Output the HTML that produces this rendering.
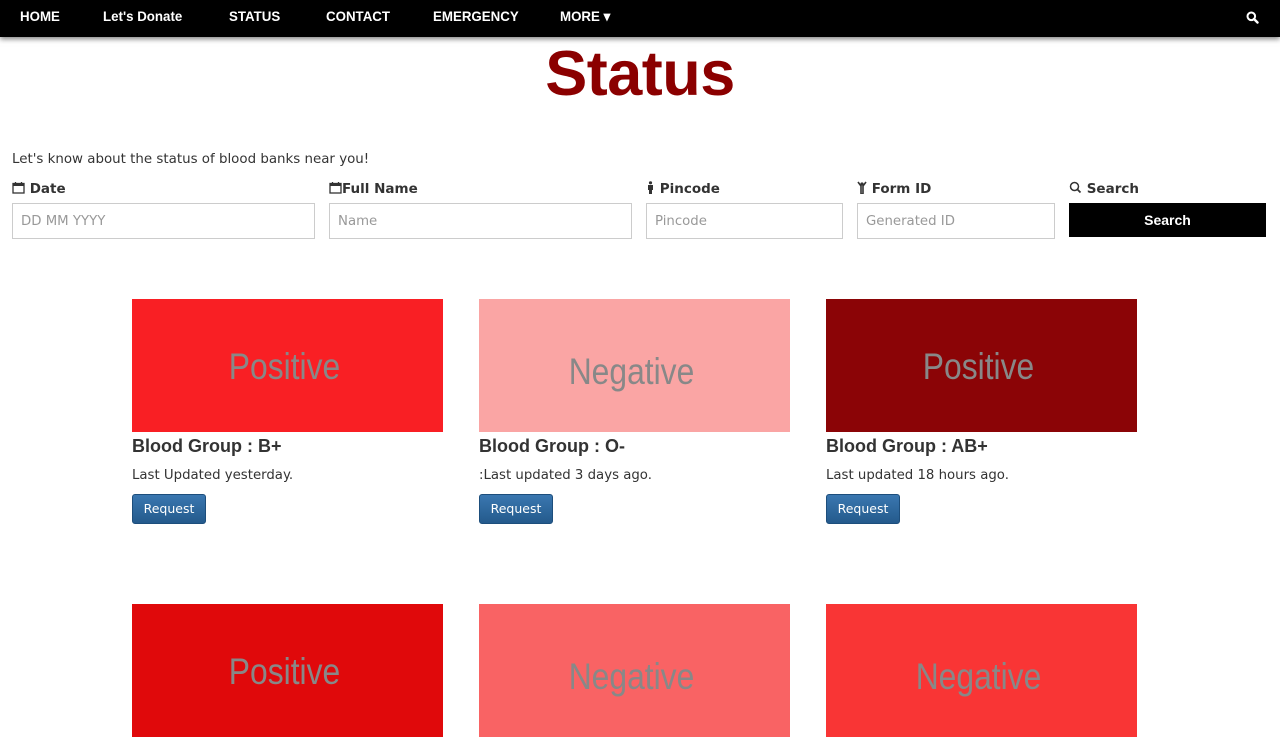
<!DOCTYPE html>
<html><head><style>
*{box-sizing:border-box;margin:0;padding:0}
body{width:1280px;height:742px;overflow:hidden;background:#fff;font-family:"DejaVu Sans",Verdana,sans-serif;color:#333}
.nav{position:absolute;top:0;left:0;width:1280px;height:37px;background:#000;box-shadow:0 2px 5px rgba(0,0,0,.5);font-family:"Liberation Sans",Arial,sans-serif;color:#fff;font-size:14px;font-weight:bold}
.nav span{position:absolute;top:8px;transform:scaleX(.95);transform-origin:left}
h1{position:absolute;top:38px;left:0;width:1280px;text-align:center;font-family:"Liberation Sans",Arial,sans-serif;font-size:63px;font-weight:bold;color:#8b0000;letter-spacing:-.5px}
.intro{position:absolute;top:152px;left:12px;font-size:13.4px}
.lbl{position:absolute;top:181px;font-size:13.5px;font-weight:bold}
.lbl svg{vertical-align:-1px}
.inp{position:absolute;top:203px;height:36px;border:1px solid #ccc;font-size:13.3px;color:#999;padding:10px 8px}
.btn{position:absolute;top:203px;left:1069px;width:197px;height:34px;background:#000;color:#fff;font-family:"Liberation Sans",Arial,sans-serif;font-weight:bold;font-size:14px;text-align:center;line-height:34px}
.img{position:absolute;width:311px;height:133px;overflow:hidden}
.img span{position:absolute;left:-3px;width:311px;text-align:center;font-family:"Liberation Sans Narrow","Liberation Sans",Arial,sans-serif;font-size:37px;color:#888;transform:scaleX(.86)}
.t{position:absolute;font-family:"Liberation Sans",Arial,sans-serif;font-weight:bold;font-size:18px;color:#333}
.s{position:absolute;font-size:13.3px}
.r{position:absolute;width:74px;height:30px;border-radius:3px;background:linear-gradient(#3a77b0,#245a8c);border:1px solid #1d4e7c;color:#fff;font-family:"DejaVu Sans",sans-serif;font-size:12.5px;text-align:center;line-height:28px}
</style></head><body>
<div class="nav">
<span style="left:20px">HOME</span><span style="left:103px">Let's Donate</span><span style="left:229px">STATUS</span><span style="left:326px">CONTACT</span><span style="left:433px">EMERGENCY</span><span style="left:560px">MORE ▾</span>
<svg style="position:absolute;left:1246px;top:11px" width="13" height="13" viewBox="0 0 13 13"><circle cx="5.3" cy="5.3" r="3.8" fill="none" stroke="#fff" stroke-width="2"/><path d="M8 8l3.5 3.5" stroke="#fff" stroke-width="2.4" stroke-linecap="round"/></svg>
</div>
<h1>Status</h1>
<div class="intro">Let's know about the status of blood banks near you!</div>
<div class="lbl" style="left:12px"><svg width="13" height="13" viewBox="0 0 13 13"><rect x="1" y="2.5" width="11" height="9.5" fill="none" stroke="#333" stroke-width="1.3"/><rect x="1" y="2.5" width="11" height="2.5" fill="#333"/><path d="M3.5 1v3M9.5 1v3" stroke="#333" stroke-width="1.3"/></svg> Date</div>
<div class="lbl" style="left:329px"><svg width="13" height="13" viewBox="0 0 13 13"><rect x="1" y="2.5" width="11" height="9.5" fill="none" stroke="#333" stroke-width="1.3"/><rect x="1" y="2.5" width="11" height="2.5" fill="#333"/><path d="M3.5 1v3M9.5 1v3" stroke="#333" stroke-width="1.3"/></svg>Full Name</div>
<div class="lbl" style="left:646px"><svg width="9" height="13" viewBox="0 0 9 13"><circle cx="4.5" cy="1.8" r="1.6" fill="#333"/><path d="M2 4h5v5H6v4H3V9H2z" fill="#333"/></svg> Pincode</div>
<div class="lbl" style="left:857px"><svg width="10" height="13" viewBox="0 0 10 13"><circle cx="5" cy="3" r="1.6" fill="#333"/><path d="M1 1l3 4v8h2V5l3-4" fill="none" stroke="#333" stroke-width="1.6"/></svg> Form ID</div>
<div class="lbl" style="left:1069px"><svg width="13" height="13" viewBox="0 0 13 13"><circle cx="5.5" cy="5.5" r="4" fill="none" stroke="#333" stroke-width="1.5"/><path d="M8.5 8.5l3 3" stroke="#333" stroke-width="1.8"/></svg> Search</div>
<div class="inp" style="left:12px;width:303px">DD MM YYYY</div>
<div class="inp" style="left:329px;width:303px">Name</div>
<div class="inp" style="left:646px;width:197px">Pincode</div>
<div class="inp" style="left:857px;width:198px">Generated ID</div>
<div class="btn">Search</div>

<div class="img" style="left:132px;top:299px;background:#f91f24"><span style="top:47px">Positive</span></div>
<div class="img" style="left:479px;top:299px;background:#faa5a4"><span style="top:52px">Negative</span></div>
<div class="img" style="left:826px;top:299px;background:#8b0406"><span style="top:47px">Positive</span></div>
<div class="t" style="left:132px;top:436px">Blood Group : B+</div>
<div class="t" style="left:479px;top:436px">Blood Group : O-</div>
<div class="t" style="left:826px;top:436px">Blood Group : AB+</div>
<div class="s" style="left:132px;top:468px">Last Updated yesterday.</div>
<div class="s" style="left:479px;top:468px">:Last updated 3 days ago.</div>
<div class="s" style="left:826px;top:468px">Last updated 18 hours ago.</div>
<div class="r" style="left:132px;top:494px">Request</div>
<div class="r" style="left:479px;top:494px">Request</div>
<div class="r" style="left:826px;top:494px">Request</div>

<div class="img" style="left:132px;top:604px;background:#e0090b"><span style="top:47px">Positive</span></div>
<div class="img" style="left:479px;top:604px;background:#f96364"><span style="top:52px">Negative</span></div>
<div class="img" style="left:826px;top:604px;background:#f93535"><span style="top:52px">Negative</span></div>
</body></html>
